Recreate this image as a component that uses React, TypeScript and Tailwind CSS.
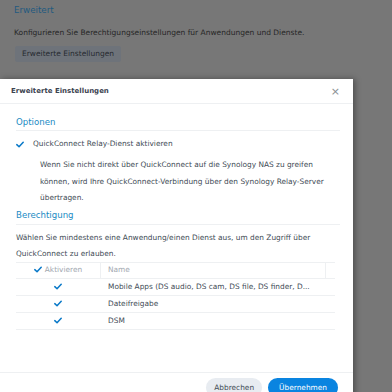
import React from 'react';

function Check({ className = '' }: { className?: string }) {
  return (
    <svg viewBox="0 0 10 8" className={className} fill="none">
      <path d="M1 4.2 L3.8 6.8 L9 1.2" stroke="#0a79c8" strokeWidth="1.9" strokeLinecap="round" strokeLinejoin="round" />
    </svg>
  );
}

const ROWS = ['Mobile Apps (DS audio, DS cam, DS file, DS finder, D...', 'Dateifreigabe', 'DSM'];

export default function App() {
  return (
    <div className="relative w-[392px] h-[392px] overflow-hidden bg-[#777777]" style={{ fontFamily: '"DejaVu Sans", Verdana, sans-serif' }}>
      {/* page behind overlay */}
      <div className="px-[14px] pt-[4px]">
        <div className="text-[8.7px] leading-[13px] text-[#1f5a80]">Erweitert</div>
        <div className="mt-[10px] text-[7.5px] leading-[12px] text-[#262626]">
          Konfigurieren Sie Berechtigungseinstellungen für Anwendungen und Dienste.
        </div>
        <div className="mt-[5px] ml-[1px] inline-flex h-[16px] items-center rounded-[2px] bg-[#6e737a] px-[7px] text-[7.5px] text-[#262a30]">
          Erweiterte Einstellungen
        </div>
      </div>

      {/* dialog */}
      <div className="absolute left-0 top-[79px] w-[353px] h-[320px] bg-white shadow-[2px_0_6px_rgba(0,0,0,0.35)] flex flex-col">
        <div className="flex h-[25px] shrink-0 items-center justify-between border-b border-[#eef0f2] pl-[11px] pr-[13px]">
          <span className="text-[7px] font-bold text-[#3c4350]">Erweiterte Einstellungen</span>
          <span className="text-[11px] leading-none text-[#8a8f96]">×</span>
        </div>

        <div className="pl-[16px] pr-[13px]">
          <div className="mt-[11px] border-b border-[#eef0f2] pb-[1px] text-[8.6px] leading-[14px] text-[#1a8bc4]">Optionen</div>
          <div className="mt-[7px] flex items-center gap-[9px] text-[7.4px] leading-[12px] text-[#414b55]">
            <Check className="w-[8px] h-[7px]" />
            <span>QuickConnect Relay-Dienst aktivieren</span>
          </div>
          <div className="mt-[7px] pl-[24px] pr-[8px] text-[7.4px] leading-[16.5px] text-[#414b55]">
            Wenn Sie nicht direkt über QuickConnect auf die Synology NAS zu greifen können, wird Ihre QuickConnect-Verbindung über den Synology Relay-Server übertragen.
          </div>

          <div className="mt-[1px] border-b border-[#eef0f2] pb-[2px] text-[8.6px] leading-[14px] text-[#1a8bc4]">Berechtigung</div>
          <div className="mt-[5px] pr-[8px] text-[7.4px] leading-[16px] text-[#414b55]">
            Wählen Sie mindestens eine Anwendung/einen Dienst aus, um den Zugriff über QuickConnect zu erlauben.
          </div>

          <div className="mr-[5px] text-[7.4px] text-[#414b55]">
            <div className="flex h-[17px] items-center border-y border-[#eef0f2]">
              <div className="flex w-[84px] items-center justify-center gap-[3px] text-[#a2a8b0]">
                <Check className="w-[8px] h-[7px]" />
                <span>Aktivieren</span>
              </div>
              <div className="h-full flex-1 border-x border-[#eef0f2] pl-[7px] flex items-center text-[#a2a8b0]">Name</div>
              <div className="w-[9px]" />
            </div>
            {ROWS.map((r) => (
              <div key={r} className="flex h-[17px] items-center border-b border-[#eef0f2]">
                <div className="flex w-[84px] items-center justify-center">
                  <Check className="w-[8px] h-[7px]" />
                </div>
                <div className="flex-1 pl-[8px] whitespace-nowrap">{r}</div>
              </div>
            ))}
          </div>
        </div>

        <div className="mt-auto mb-[2px] border-t border-[#eef0f2] flex justify-end gap-[6px] pr-[15px] pt-[5px]">
          <div className="flex h-[19px] items-center rounded-full bg-[#e8ecf1] px-[8px] text-[7.4px] text-[#414b55]">Abbrechen</div>
          <div className="flex h-[19px] items-center rounded-full bg-[#0a84e0] px-[11px] text-[7.4px] text-white">Übernehmen</div>
        </div>
      </div>
    </div>
  );
}
